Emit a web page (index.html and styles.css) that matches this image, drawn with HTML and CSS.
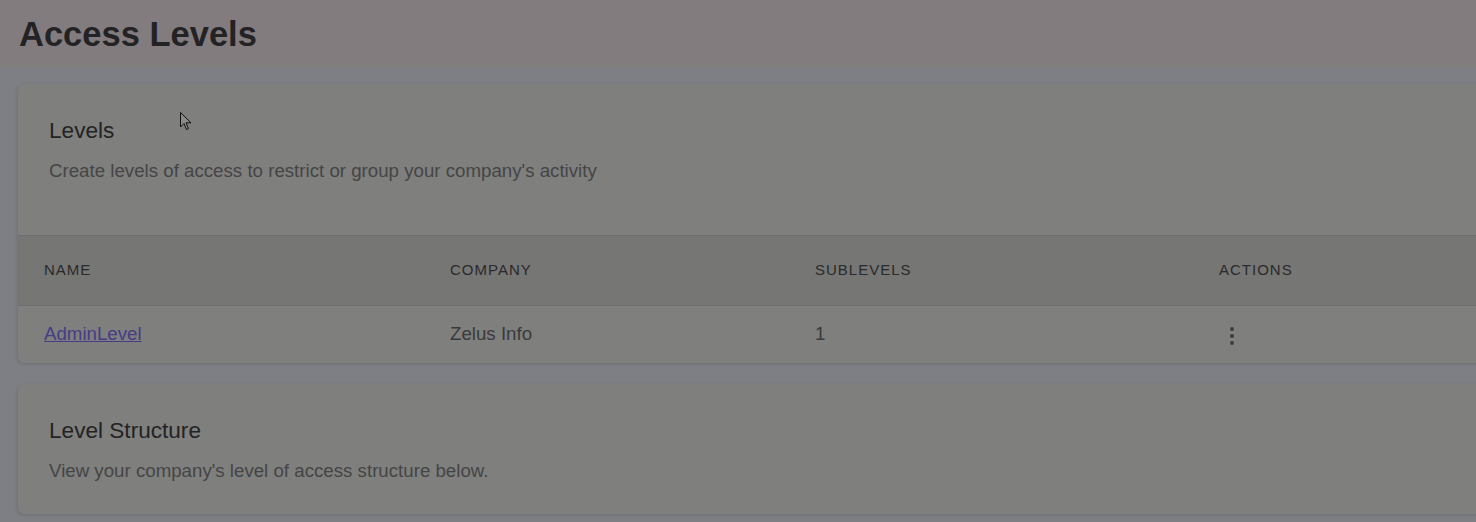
FILE: index.html
```html
<!DOCTYPE html>
<html lang="en">
<head>
<meta charset="utf-8">
<title>Access Levels</title>
<link rel="stylesheet" href="styles.css">
</head>
<body>
<div class="page">
  <header class="topbar">
    <h1 class="page-title">Access Levels</h1>
  </header>
  <div class="band"></div>
  <main class="content">
    <section class="card">
      <div class="card-head">
        <h2 class="card-title">Levels</h2>
        <p class="card-sub">Create levels of access to restrict or group your company's activity</p>
      </div>
      <div class="table">
        <div class="row head">
          <div class="cell">NAME</div>
          <div class="cell">COMPANY</div>
          <div class="cell">SUBLEVELS</div>
          <div class="cell">ACTIONS</div>
        </div>
        <div class="row body">
          <div class="cell"><a class="link" href="#">AdminLevel</a></div>
          <div class="cell">Zelus Info</div>
          <div class="cell">1</div>
          <div class="cell">
            <svg class="kebab" width="6" height="20" viewBox="0 0 6 20"><circle cx="3" cy="3" r="2"/><circle cx="3" cy="10" r="2"/><circle cx="3" cy="17" r="2"/></svg>
          </div>
        </div>
      </div>
    </section>
    <section class="card">
      <div class="card-head small">
        <h2 class="card-title">Level Structure</h2>
        <p class="card-sub">View your company's level of access structure below.</p>
      </div>
    </section>
  </main>
  <svg class="cursor" width="12" height="19" viewBox="0 0 12 19"><path d="M0.5 0.5 L0.5 15 L4 11.5 L6.5 17.5 L8.5 16.6 L6 10.8 L11 10.8 Z" fill="#8a8a8a" stroke="#111" stroke-width="1"/></svg>
</div>
</body>
</html>
```
FILE: styles.css
```css
html, body {
  margin: 0;
  padding: 0;
}
body {
  background: #7e7f84;
  font-family: "Liberation Sans", Arial, sans-serif;
  overflow: hidden;
  width: 1476px;
  height: 522px;
}
.page {
  position: relative;
  height: 522px;
}
.topbar {
  height: 64px;
  box-sizing: border-box;
  background: #827c7e;
  padding: 14px 0 0 19px;
}
.page-title {
  margin: 0;
  font-size: 34.5px;
  line-height: 40px;
  font-weight: 700;
  color: #232224;
}
.band {
  height: 5px;
  background: #807f7d;
}
.content {
  padding: 15px 0 0 18px;
  display: flex;
  flex-direction: column;
  gap: 21px;
}
.card {
  background: #7f7f7e;
  border-radius: 6px;
  margin-right: -30px;
  box-shadow: -1px 1px 3px rgba(0, 0, 0, 0.12);
  overflow: hidden;
}
.card-head {
  padding: 34px 31px 53px;
}
.card-head.small {
  padding-bottom: 32px;
}
.card-title {
  margin: 0;
  font-size: 22.6px;
  line-height: 26px;
  font-weight: 400;
  color: #232323;
}
.card-sub {
  margin: 16px 0 0;
  font-size: 18.7px;
  line-height: 22px;
  color: #454545;
}
.table {
  border-top: 1px solid #6e6e6e;
}
.row {
  display: grid;
  grid-template-columns: 406px 365px 404px 1fr;
  padding-left: 26px;
  align-items: center;
  box-sizing: border-box;
}
.row.head {
  height: 70px;
  padding-bottom: 2px;
  background: #767675;
  border-bottom: 1px solid #6e6e6e;
  font-size: 15px;
  letter-spacing: 1px;
  color: #2a2a2a;
}
.row.body {
  height: 57px;
  padding-bottom: 2px;
  font-size: 18.7px;
  color: #3a3a3a;
}
.link {
  color: #463c86;
  text-decoration: underline;
  font-size: 18.7px;
}
.kebab {
  display: block;
  fill: #3c3c3c;
  margin-left: 10px;
  margin-top: 4px;
}
.cursor {
  position: absolute;
  left: 180px;
  top: 112px;
}
```
